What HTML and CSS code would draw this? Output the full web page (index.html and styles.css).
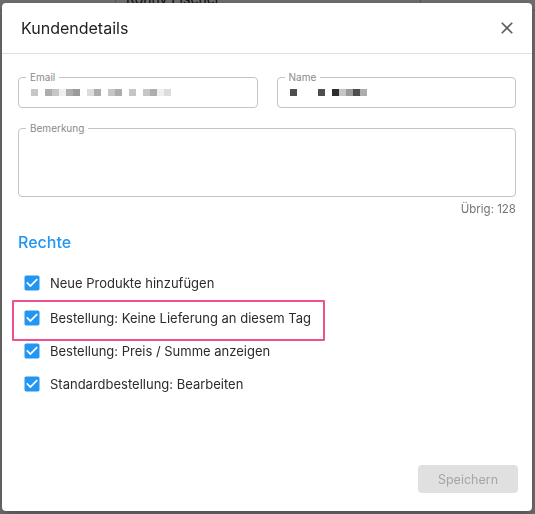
FILE: index.html
```html
<!DOCTYPE html>
<html lang="de">

<head>
  <meta charset="UTF-8" />
  <meta name="viewport" content="width=device-width, initial-scale=1.0" />
  <title>Kundendetails</title>
  <link rel="stylesheet" href="styles.css">
</head>

<body>
  <!-- customer table underneath the modal -->
  <div class="page">
    <div class="tableRow">
      <div class="cell first"></div>
      <div class="cell name">Ronny Fischer</div>
      <div class="cell"></div>
    </div>
  </div>

  <div class="backdrop">
    <div class="dialog">
      <header class="dialogHead">
        <h2>Kundendetails</h2>
        <button class="close" aria-label="Schließen">
          <svg viewBox="0 0 24 24" width="20" height="20">
            <path d="M19 6.41L17.59 5 12 10.59 6.41 5 5 6.41 10.59 12 5 17.59 6.41 19 12 13.41 17.59 19 19 17.59 13.41 12z" />
          </svg>
        </button>
      </header>

      <div class="dialogBody">
        <div class="fieldRow">
          <div class="field">
            <label>Email</label>
            <div class="hidden">
              <span class="s3"></span><span></span><span class="s4"></span><span class="s3"></span><span class="s1"></span><span class="s4"></span><span class="s5"></span><span></span><span class="s2"></span><span class="s4"></span><span></span><span class="s3"></span><span class="s4"></span><span></span><span class="s3"></span><span></span><span class="s3"></span><span class="s4"></span><span class="s1"></span><span class="s2"></span>
            </div>
          </div>
          <div class="field">
            <label>Name</label>
            <div class="hidden">
              <span class="s6"></span><span></span><span></span><span></span><span class="s6"></span><span></span><span class="s7"></span><span class="s3"></span><span class="s5"></span><span class="s6"></span><span class="s4"></span>
            </div>
          </div>
        </div>

        <div class="field area">
          <label>Bemerkung</label>
        </div>
        <div class="counter">Übrig: 128</div>

        <h3 class="sectionTitle">Rechte</h3>
        <ul class="perms">
          <li>
            <svg class="check" viewBox="0 0 24 24" width="20" height="20"><path d="M19 3H5c-1.11 0-2 .9-2 2v14c0 1.1.89 2 2 2h14c1.11 0 2-.9 2-2V5c0-1.1-.89-2-2-2zm-9 14l-5-5 1.41-1.41L10 14.17l7.59-7.59L19 8l-9 9z" /></svg>
            Neue Produkte hinzufügen
          </li>
          <li class="marked">
            <svg class="check" viewBox="0 0 24 24" width="20" height="20"><path d="M19 3H5c-1.11 0-2 .9-2 2v14c0 1.1.89 2 2 2h14c1.11 0 2-.9 2-2V5c0-1.1-.89-2-2-2zm-9 14l-5-5 1.41-1.41L10 14.17l7.59-7.59L19 8l-9 9z" /></svg>
            Bestellung: Keine Lieferung an diesem Tag
          </li>
          <li>
            <svg class="check" viewBox="0 0 24 24" width="20" height="20"><path d="M19 3H5c-1.11 0-2 .9-2 2v14c0 1.1.89 2 2 2h14c1.11 0 2-.9 2-2V5c0-1.1-.89-2-2-2zm-9 14l-5-5 1.41-1.41L10 14.17l7.59-7.59L19 8l-9 9z" /></svg>
            Bestellung: Preis / Summe anzeigen
          </li>
          <li>
            <svg class="check" viewBox="0 0 24 24" width="20" height="20"><path d="M19 3H5c-1.11 0-2 .9-2 2v14c0 1.1.89 2 2 2h14c1.11 0 2-.9 2-2V5c0-1.1-.89-2-2-2zm-9 14l-5-5 1.41-1.41L10 14.17l7.59-7.59L19 8l-9 9z" /></svg>
            Standardbestellung: Bearbeiten
          </li>
        </ul>
      </div>

      <footer class="dialogFoot">
        <button class="save" disabled>Speichern</button>
      </footer>
    </div>
  </div>
</body>

</html>
```

FILE: styles.css
```css
* {
  box-sizing: border-box;
}

body {
  margin: 0;
  font-family: Inter, "Noto Sans", sans-serif;
  background: #fff;
  height: 514px;
  overflow: hidden;
}

.page {
  height: 100%;
}

.tableRow {
  display: flex;
  height: 22px;
  margin-top: -11px;
  border-bottom: 1px solid #ddd;
}

.cell {
  flex: 1;
  font-size: 14px;
  line-height: 20px;
  color: #222;
}

.cell.first {
  flex: none;
  width: 116px;
  border-right: 1px solid #ccc;
}

.cell.name {
  flex: none;
  width: 305px;
  padding-left: 10px;
  border-right: 1px solid #ccc;
}

.backdrop {
  position: fixed;
  inset: 0;
  background: rgba(0, 0, 0, 0.57);
}

.dialog {
  position: absolute;
  left: 2px;
  top: 3px;
  width: 530px;
  height: 508px;
  background: #fff;
  border-radius: 4px;
  box-shadow: 0 4px 12px rgba(0, 0, 0, 0.3);
  display: flex;
  flex-direction: column;
}

.dialogHead {
  height: 51px;
  display: flex;
  align-items: center;
  justify-content: space-between;
  padding: 0 15px 0 19px;
  border-bottom: 1px solid #e0e0e0;
}

.dialogHead h2 {
  margin: 0;
  font-size: 16px;
  font-weight: 400;
  color: #222;
}

.close {
  border: none;
  background: none;
  padding: 0;
  display: flex;
  fill: #5f5f5f;
}

.dialogBody {
  padding: 23px 16px 0 16px;
}

.fieldRow {
  display: grid;
  grid-template-columns: 1fr 1fr;
  gap: 19px;
}

.field {
  position: relative;
  height: 31px;
  border: 1px solid #c4c4c4;
  border-radius: 4px;
  display: flex;
  align-items: center;
  padding-left: 12px;
}

.field label {
  position: absolute;
  top: -7px;
  left: 7px;
  padding: 0 4px;
  background: #fff;
  font-size: 10px;
  line-height: 12px;
  color: #8a8a8a;
}

.hidden {
  display: flex;
}

.hidden span {
  width: 7px;
  height: 7px;
}

.s1 { background: #efefef; }
.s2 { background: #dcdcdc; }
.s3 { background: #c6c6c6; }
.s4 { background: #adadad; }
.s5 { background: #9a9a9a; }
.s6 { background: #4e4e4e; }
.s7 { background: #2e2e2e; }

.field.area {
  height: 69px;
  margin-top: 20px;
}

.counter {
  text-align: right;
  margin-top: 5px;
  font-size: 11.5px;
  line-height: 14px;
  color: #757575;
}

.sectionTitle {
  margin: 16px 0 0 0;
  font-size: 16px;
  line-height: 20px;
  font-weight: 500;
  color: #2196f3;
}

.perms {
  list-style: none;
  margin: 14px 0 0 0;
  padding: 0;
}

.perms li {
  height: 33px;
  display: flex;
  align-items: center;
  gap: 8px;
  padding-left: 4px;
  font-size: 13px;
  color: #2b2b2b;
}

.perms li.marked {
  position: relative;
  margin: 2px 0 0 0;
}

/* pink outline around the row */
.perms li.marked::after {
  content: "";
  position: absolute;
  left: -6px;
  top: -1px;
  width: 309px;
  height: 37px;
  border: 2px solid #f0508e;
  border-radius: 1px;
}

.check {
  fill: #2196f3;
}

.dialogFoot {
  margin-top: auto;
  display: flex;
  justify-content: flex-end;
  padding: 0 14px 18px 0;
}

.save {
  width: 100px;
  height: 28px;
  border: none;
  border-radius: 4px;
  background: #e0e0e0;
  color: #a6a6a6;
  font-family: Inter, "Noto Sans", sans-serif;
  font-size: 12.5px;
}
```
